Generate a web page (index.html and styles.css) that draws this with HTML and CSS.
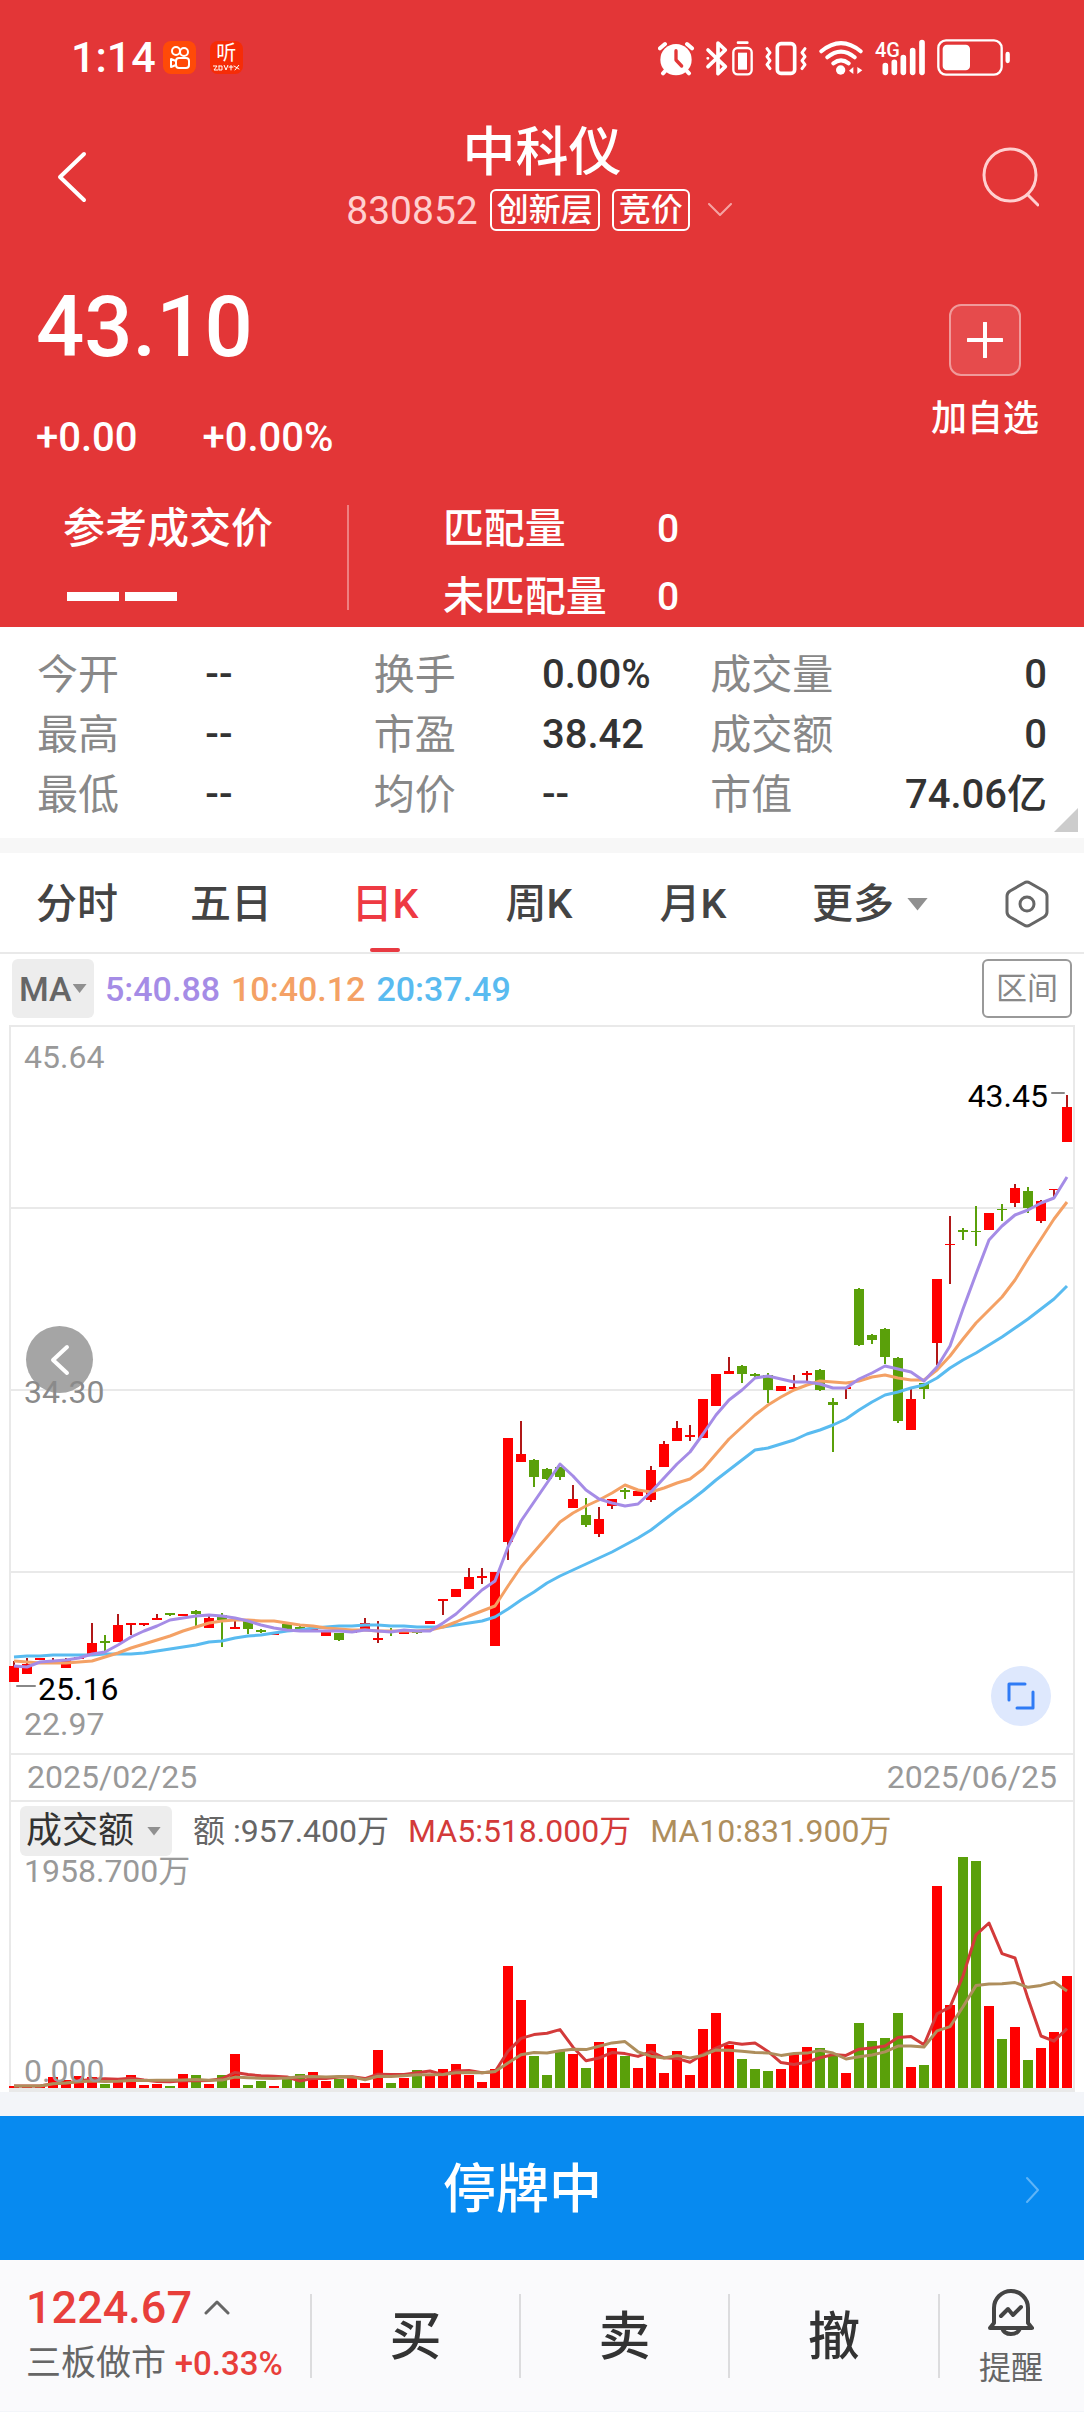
FILE: index.html
```html
<!DOCTYPE html>
<html lang="zh-CN">
<head>
<meta charset="utf-8">
<meta name="viewport" content="width=device-width, initial-scale=1">
<title>中科仪 830852</title>
<link rel="stylesheet" href="styles.css">
</head>
<body>
<header class="hero">
  <div class="status">
    <span class="clock">1:14</span>
    <svg class="app" viewBox="0 0 33 33" aria-hidden="true">
      <rect width="33" height="33" rx="8" fill="#ff4a08"/>
      <g fill="none" stroke="#fff" stroke-width="2">
        <circle cx="13" cy="10" r="4"/><circle cx="21" cy="11" r="4"/>
        <rect x="13" y="17" width="13" height="10" rx="3"/><path d="M13 20l-5-2v8l5-2"/>
      </g>
    </svg>
    <span class="app listen">听<svg viewBox="0 0 27 6" aria-hidden="true"><path d="M0 1h4L1 5h4M6 1v4h3V1H6M11 0l2 5 2-5M16 2h4M18 0v5M21 1l5 3M26 0l-4 5" fill="none" stroke="#fff"/></svg></span>
    <svg class="system" viewBox="54 42 1059 126" role="img" aria-label="闹钟 蓝牙 振动 无线网络 4G 电池">
      <circle cx="108" cy="113" r="47" fill="#fff"/>
      <g fill="none" stroke="#fff" stroke-width="12" stroke-linecap="round">
        <path d="M60 79l15-13M156 79l-15-13M80 142l-11 12M136 142l11 12"/>
        <path d="M204 84l52 50-22 21V63l22 21-52 50" stroke-width="11" stroke-linejoin="round"/>
        <path d="M203 109h1M294 62h28" stroke-width="8"/>
        <rect x="280" y="78" width="55" height="79" rx="13" stroke-width="7"/>
        <rect x="412" y="65" width="52" height="89" rx="11" stroke-width="11"/>
        <path d="M381 80l9 12-9 12 9 12-9 12 9 12M495 80l-9 12 9 12-9 12 9 12-9 12" stroke-width="9" stroke-linejoin="round"/>
        <path d="M544 88q59-49 118 0M562 106q41-34 82 0M580 124q23-18 46 0"/>
        <path d="M736 131v20M763 121v30M790 107v44M818 86v65M846 62v89" stroke-width="17"/>
        <rect x="895" y="55" width="190" height="103" rx="23" stroke-width="7"/>
        <path d="M1103 96v21" stroke-width="13"/>
      </g>
      <path d="M108 86v28l17 18" fill="none" stroke="#e33637" stroke-width="10"/>
      <rect x="294" y="92" width="27" height="51" fill="#fff"/>
      <circle cx="602" cy="144" r="14" fill="#fff"/>
      <path d="M640 135v21l-13-10zM652 135v21l15-11z" fill="#fff"/>
      <rect x="908" y="68" width="82" height="77" rx="13" fill="#fff"/>
      <text class="network" x="705" y="106">4G</text>
    </svg>
  </div>

  <nav class="nav">
    <button class="back" aria-label="返回"><svg width="31" height="52" viewBox="0 0 31 52"><path d="M28 3L4 26l24 23"/></svg></button>
    <div class="heading">
      <h1>中科仪</h1>
      <div class="sub">
        <span class="code">830852</span>
        <span class="badge">创新层</span>
        <span class="badge">竞价</span>
        <svg class="down" width="24" height="14" viewBox="0 0 24 14"><path d="M1 1l11 11L23 1"/></svg>
      </div>
    </div>
    <button class="search" aria-label="搜索"><svg width="58" height="62" viewBox="0 0 58 62"><circle cx="29" cy="29" r="26"/><path d="M47 49l10 10"/></svg></button>
  </nav>

  <section class="quote">
    <div>
      <strong class="price">43.10</strong>
      <p class="change"><span>+0.00</span><span>+0.00%</span></p>
    </div>
    <button class="watch">
      <span class="plus"><svg width="36" height="36" viewBox="0 0 36 36"><path d="M18 1v34M1 18h34"/></svg></span>
      加自选
    </button>
  </section>

  <section class="auction">
    <div class="ref"><span>参考成交价</span><span class="dashes" aria-label="--"><i></i><i></i></span></div>
    <dl class="match">
      <dt>匹配量</dt><dd>0</dd>
      <dt>未匹配量</dt><dd>0</dd>
    </dl>
  </section>
</header>

<main>
  <section class="stats">
    <dl><dt>今开</dt><dd>--</dd><dt>最高</dt><dd>--</dd><dt>最低</dt><dd>--</dd></dl>
    <dl><dt>换手</dt><dd>0.00%</dd><dt>市盈</dt><dd>38.42</dd><dt>均价</dt><dd>--</dd></dl>
    <dl class="wide"><dt>成交量</dt><dd>0</dd><dt>成交额</dt><dd>0</dd><dt>市值</dt><dd>74.06亿</dd></dl>
    <span class="corner"></span>
  </section>

  <nav class="tabs">
    <button>分时</button>
    <button>五日</button>
    <button class="active">日K</button>
    <button>周K</button>
    <button>月K</button>
    <button>更多<i class="tri big"></i></button>
    <button aria-label="设置"><svg width="44" height="48" viewBox="0 0 44 48"><path d="M19 3q3-2 6 0l14 8q3 2 3 5v16q0 3-3 5l-14 8q-3 2-6 0L5 37q-3-2-3-5V16q0-3 3-5z"/><circle cx="22" cy="24" r="7"/></svg></button>
  </nav>

  <div class="averages">
    <button class="pick">MA<i class="tri"></i></button>
    <span class="ma5">5:40.88</span>
    <span class="ma10">10:40.12</span>
    <span class="ma20">20:37.49</span>
    <button class="range">区间</button>
  </div>

  <section class="chart">
    <div class="plot">
      <svg id="candles" viewBox="11 1027 1062 726" role="img" aria-label="日K线图"></svg>
      <span class="tick top">45.64</span>
      <button class="prev" aria-label="更早"><svg width="20" height="32" viewBox="0 0 20 32"><path d="M17 3L3 16l14 13"/></svg></button>
      <span class="tick mid">34.30</span>
      <span class="tick low">22.97</span>
      <span class="mark max">43.45</span>
      <span class="mark min">25.16</span>
      <button class="expand" aria-label="全屏"><svg width="28" height="28" viewBox="0 0 28 28"><path d="M2 18V2h16M26 10v16H10"/></svg></button>
    </div>
    <div class="dates"><time>2025/02/25</time><time>2025/06/25</time></div>
    <div class="legend">
      <button class="pick turnover">成交额<i class="tri"></i></button>
      <span>额 :957.400万</span>
      <span class="v5">MA5:518.000万</span>
      <span class="v10">MA10:831.900万</span>
    </div>
    <div class="plot">
      <svg id="volume" viewBox="11 0 1062 231" role="img" aria-label="成交额"></svg>
      <span class="tick vmax">1958.700万</span>
      <span class="tick vmin">0.000</span>
    </div>
  </section>
</main>

<button class="halt"><span>停牌中</span><svg width="16" height="28" viewBox="0 0 16 28"><path d="M2 2l11 12L2 26"/></svg></button>

<footer class="bar">
  <a class="index" href="#index">
    <span class="value">1224.67<svg width="26" height="15" viewBox="0 0 26 15"><path d="M2 13L13 2l11 11"/></svg></span>
    <span class="name">三板做市 <b>+0.33%</b></span>
  </a>
  <button class="trade">买</button>
  <button class="trade">卖</button>
  <button class="trade">撤</button>
  <button class="remind">
    <svg width="46" height="48" viewBox="0 0 46 48"><path d="M6 35V20a17 17 0 0 1 34 0v15l4 5H2zM14 40q2 6 9 6t9-6M13 28l7-7 5 6 8-8"/></svg>
    提醒
  </button>
</footer>
<script src="chart.js"></script>
</body>
</html>
```

FILE: styles.css
```css
* { box-sizing: border-box; }
body {
  margin: 0;
  background: #f3f5f9;
  color: #333;
  font-family: Roboto, "Noto Sans CJK SC", sans-serif;
  font-size: 40px;
  font-weight: 500;
  line-height: 48px;
}
button {
  margin: 0;
  padding: 0;
  border: 0;
  background: none;
  color: inherit;
  font: inherit;
}
svg { display: block; }
svg path, svg circle { stroke-linecap: round; stroke-linejoin: round; }
h1, p, dl, dd { margin: 0; }
main { background: #fff; }

/* header */
.hero { background: #e33637; color: #fff; padding-bottom: 6px; }
.status { display: flex; align-items: center; padding: 32px 73px 41px 71px; }
.clock { font-size: 43px; line-height: 50px; margin-right: 7px; }
.app { width: 33px; height: 33px; margin-right: 14px; }
.listen {
  display: flex; flex-direction: column; align-items: center;
  border-radius: 8px; background: #f62c07;
  font-size: 20px; line-height: 24px; font-weight: 400;
}
.listen svg { width: 27px; height: 6px; }
.system { width: 353px; height: 42px; margin-left: auto; }
.network { font-size: 60px; fill: #fff; }

.nav { display: grid; grid-template-columns: 1fr auto 1fr; align-items: center; padding: 0 45px; }
.nav path, .nav circle { fill: none; stroke: #fff; stroke-width: 4; }
.back { justify-self: start; padding-left: 11px; }
.heading { display: flex; flex-direction: column; align-items: center; gap: 6px; }
h1 { font-size: 53px; line-height: 60px; font-weight: 500; }
.sub { display: flex; align-items: center; height: 42px; gap: 12px; margin-right: 6px; }
.code { font-size: 39px; font-weight: 400; color: #ffd0d0; padding-top: 2px; }
.badge { border: 2px solid #fff; border-radius: 6px; padding: 0 5px; font-size: 32px; line-height: 38px; }
.sub .down { margin-left: 6px; }
.sub .down path { stroke: #f5a3a3; stroke-width: 2; }
.search { justify-self: end; }
.search path, .search circle { stroke: #ffd0d0; stroke-width: 3; }

.quote { display: flex; justify-content: space-between; padding: 50px 45px 0 36px; }
.price { display: block; padding-top: 2px; font-size: 85px; line-height: 88px; font-weight: 500; }
.change { display: flex; gap: 65px; margin-top: 43px; }
.watch { display: flex; flex-direction: column; align-items: center; align-self: start; gap: 21px; padding-top: 23px; font-size: 36px; line-height: 44px; }
.plus { display: grid; place-items: center; width: 72px; height: 72px; border: 2px solid #f09a9a; border-radius: 12px; background: #e64b4c; }
.plus path { stroke: #fff; stroke-width: 4; }

.auction { display: grid; grid-template-columns: 32% 1fr; padding-top: 43px; font-size: 41px; }
.ref { display: flex; flex-direction: column; gap: 39px; padding-left: 63px; font-size: 42px; }
.dashes { display: flex; gap: 6px; padding-left: 4px; }
.dashes i { width: 52px; height: 9px; background: #fff; }
.match {
  display: grid; grid-template-columns: 214px auto; justify-content: start; row-gap: 20px;
  padding-left: 96px;
  background: linear-gradient(#ee8080, #ee8080) 0 0 / 2px 105px no-repeat;
}
.match dd { font-size: 39px; }

/* figures */
.stats { position: relative; display: grid; grid-template-columns: repeat(3, 1fr); padding: 18px 37px 13px; border-bottom: 15px solid #f7f7f7; box-sizing: content-box; line-height: 60px; }
.stats dl { display: grid; grid-template-columns: 1fr 1fr; }
.stats .wide { grid-template-columns: auto 1fr; }
.stats .wide dd { text-align: right; }
.stats dt { color: #888; font-size: 41px; font-weight: 400; }
.corner { position: absolute; right: 6px; bottom: 6px; width: 24px; height: 24px; background: #ccc; clip-path: polygon(100% 0, 100% 100%, 0 100%); }

.tabs { display: grid; grid-template-columns: repeat(5, 77fr) 100fr 57fr; height: 101px; border-bottom: 2px solid #e9e9e9; }
.tabs button { position: relative; display: flex; align-items: center; justify-content: center; padding-top: 3px; font-size: 41px; color: #444; }
.tabs .active { color: #ee3a43; }
.tabs .active::after { content: ""; position: absolute; bottom: 0; width: 30px; height: 4px; border-radius: 2px; background: #e83a42; }
.tabs svg path, .tabs svg circle { fill: none; stroke: #666; stroke-width: 3; }
.tri { flex: none; width: 14px; height: 9px; background: #909090; clip-path: polygon(0 0, 100% 0, 50% 100%); }
.tri.big { width: 21px; height: 13px; margin-left: 13px; }

.averages { display: flex; align-items: center; gap: 11px; padding: 5px 12px 7px; font-size: 34px; }
.pick { display: flex; align-items: center; border-radius: 6px; background: #ededed; }
.averages .pick { width: 82px; height: 59px; padding-left: 7px; gap: 1px; color: #666; font-size: 34px; }
.ma5 { color: #a58ce6; }
.ma10 { color: #f4a165; }
.ma20 { color: #59bbf0; }
.range { width: 90px; height: 59px; margin-left: auto; border: 2px solid #999; border-radius: 6px; color: #888; font-size: 31px; font-weight: 400; }

/* charts */
.chart { margin: 0 9px; border: 2px solid #e9e9e9; border-bottom-width: 4px; font-size: 32px; }
.plot { position: relative; }
.plot > svg { width: 100%; height: auto; overflow: visible; }
.tick, .mark { position: absolute; line-height: 32px; font-weight: 400; }
.tick { left: 13px; color: #999; }
.mark { color: #000; }
.top { top: 14px; }
.mid { top: 349px; }
.low { bottom: 13px; }
.max { top: 53px; right: 25px; }
.min { bottom: 48px; left: 27px; }
.vmax { top: -2px; }
.vmin { bottom: 1px; }
.prev, .expand { position: absolute; display: grid; place-items: center; border-radius: 50%; }
.prev { top: 299px; left: 15px; width: 67px; height: 67px; background: #a5a5a5; }
.prev path { fill: none; stroke: #fff; stroke-width: 4; }
.expand { right: 22px; bottom: 27px; width: 60px; height: 60px; background: #dee8fd; }
.expand path { fill: none; stroke: #2f7bf5; stroke-width: 3; }
.mid { color: #8a8a8a; }
.dates { display: flex; justify-content: space-between; padding: 0 16px; border: solid #e9e9e9; border-width: 2px 0; color: #999; line-height: 45px; font-weight: 400; }
.legend { display: flex; align-items: center; gap: 19px; padding: 4px 9px 1px; color: #666; font-weight: 400; white-space: nowrap; }
.turnover { width: 152px; height: 50px; padding-left: 6px; gap: 13px; margin-right: 2px; color: #333; font-size: 36px; }
.v5 { color: #d33a3a; }
.v10 { color: #ae8e5c; }

/* bottom */
.halt { display: flex; align-items: center; width: 100%; height: 144px; margin-top: 24px; padding: 4px 43px 0 0; background: #078af0; color: #fff; font-size: 53px; }
.halt span { flex: 1; padding-left: 20px; }
.halt path { fill: none; stroke: #5fb4f7; stroke-width: 2; }
.bar { display: grid; grid-template-columns: 310fr 209fr 209fr 210fr 146fr; align-items: center; min-height: 151px; background: #fafafc; }
.index { padding-left: 26px; color: #666; text-decoration: none; white-space: nowrap; }
.value { display: flex; align-items: center; gap: 12px; color: #e83f3b; font-size: 45px; line-height: 56px; }
.value path { fill: none; stroke: #666; stroke-width: 3; }
.name { display: block; font-size: 35px; line-height: 56px; font-weight: 400; }
.name b { color: #e83f3b; font-size: 33px; font-weight: 500; }
.trade { height: 84px; padding-top: 4px; border-left: 2px solid #dcdcde; font-size: 52px; }
.remind { display: flex; flex-direction: column; align-items: center; align-self: stretch; justify-content: center; gap: 12px; background: linear-gradient(#dcdcde, #dcdcde) 0 50% / 2px 84px no-repeat; color: #666; font-size: 32px; line-height: 40px; padding-top: 4px; font-weight: 400; }
.remind path { fill: none; stroke: #444; stroke-width: 4; }
```

FILE: chart.js
```js
// Each candle: colour, high, low, body top, body bottom (plot units, y grows down)
const candles = `
r 1661 1682 1666 1682|r 1658 1674 1664 1674|r 1658 1660 1658 1660|r 1658 1662 1660 1662|r 1658 1668 1659 1668|r 1657 1659 1657 1659
r 1623 1654 1643 1654|g 1635 1651 1641 1643|r 1614 1642 1625 1642|r 1623 1635 1623 1625|r 1623 1626 1623 1625|r 1614 1619 1618 1620
g 1613 1616 1613 1615|r 1614 1616 1614 1616|g 1610 1626 1611 1614|r 1615 1628 1618 1628|g 1613 1647 1615 1620|r 1620 1629 1627 1629
g 1621 1634 1621 1629|g 1629 1633 1630 1632|r 1634 1635 1633 1635|g 1624 1630 1624 1629|g 1625 1630 1627 1629|r 1630 1631 1629 1631
r 1632 1636 1632 1636|g 1633 1641 1633 1640|r 1631 1633 1631 1633|r 1618 1629 1623 1629|r 1621 1643 1638 1640|g 1628 1636 1630 1632
r 1632 1634 1632 1634|g 1631 1634 1631 1633|r 1621 1624 1621 1624|r 1599 1615 1599 1601|r 1589 1597 1589 1597|r 1568 1589 1577 1589
r 1568 1584 1576 1578|r 1572 1646 1572 1646|r 1438 1560 1438 1542|r 1421 1462 1454 1462|g 1459 1487 1460 1477|g 1468 1480 1469 1479
g 1467 1480 1467 1477|r 1485 1508 1499 1508|g 1498 1527 1515 1525|r 1507 1537 1519 1534|r 1499 1509 1499 1506|g 1488 1499 1490 1492
r 1491 1496 1491 1496|r 1466 1502 1470 1500|r 1441 1467 1444 1467|r 1421 1441 1428 1441|r 1425 1441 1435 1437|r 1399 1438 1399 1438
r 1374 1406 1374 1406|r 1357 1374 1371 1374|g 1365 1383 1366 1374|g 1373 1377 1374 1376|g 1373 1403 1375 1390|r 1386 1391 1386 1391
r 1375 1389 1387 1389|r 1371 1383 1373 1375|g 1369 1391 1370 1390|g 1398 1452 1402 1405|r 1387 1399 1387 1389|g 1288 1346 1289 1345
g 1334 1344 1335 1340|g 1328 1364 1329 1357|g 1357 1423 1358 1421|r 1389 1430 1399 1430|g 1383 1399 1383 1389|r 1279 1365 1279 1343
r 1216 1284 1244 1245|g 1228 1240 1230 1232|g 1206 1246 1231 1232|r 1213 1230 1213 1230|g 1204 1221 1209 1210|r 1184 1207 1188 1203
g 1187 1213 1191 1208|r 1200 1223 1201 1221|r 1189 1197 1189 1190|r 1095 1142 1107 1142`
  .trim().split(/[|\n]/).map(row => row.trim().split(' '));

const averages = {
  '#59bbf0': [1657,1656,1656,1655,1655,1655,1655,1654,1654,1654,1653,1651,1649,1647,1645,1642,1641,1638,1636,1635,1633,1631,1630,1628,1627,1626,1626,1625,1625,1626,1626,1627,1627,1627,1625,1623,1621,1617,1609,1600,1592,1583,1576,1570,1564,1558,1552,1545,1538,1530,1520,1510,1501,1491,1480,1470,1460,1450,1448,1444,1440,1434,1430,1425,1419,1410,1402,1395,1392,1388,1385,1378,1368,1360,1353,1345,1337,1328,1319,1309,1299,1286],
  '#f4a165': [1661,1662,1663,1663,1663,1662,1661,1657,1653,1648,1644,1640,1636,1631,1627,1623,1621,1620,1620,1621,1621,1623,1625,1626,1628,1629,1630,1630,1631,1631,1631,1631,1630,1627,1622,1616,1611,1606,1586,1567,1552,1537,1522,1513,1506,1500,1493,1485,1490,1492,1488,1483,1479,1469,1454,1439,1427,1415,1405,1397,1390,1385,1381,1382,1383,1381,1377,1375,1378,1380,1380,1370,1356,1339,1323,1310,1297,1280,1259,1239,1219,1202],
  '#a58ce6': [1666,1667,1662,1661,1660,1658,1654,1652,1645,1637,1631,1626,1620,1618,1616,1615,1616,1618,1621,1625,1628,1630,1631,1631,1631,1631,1632,1630,1631,1632,1630,1631,1631,1623,1614,1602,1590,1581,1547,1521,1502,1483,1464,1476,1490,1499,1503,1506,1504,1492,1478,1464,1452,1434,1415,1400,1390,1378,1376,1379,1382,1382,1384,1388,1388,1379,1373,1366,1369,1372,1381,1367,1346,1309,1274,1240,1226,1215,1210,1203,1198,1177]
};

const volumes = [2,2,2,11,8,12,11,4,9,13,3,4,2,14,13,4,13,34,3,7,2,9,14,16,7,9,10,5,38,5,10,18,14,19,24,13,6,19,122,88,32,13,37,34,20,46,40,32,20,44,15,37,13,59,75,43,29,19,17,19,34,41,40,33,15,65,47,50,75,21,23,202,83,231,227,82,49,61,28,40,56,112];

const x = i => 14 + 13 * i;
const rect = (cx, top, w, h, fill) => `<rect x="${cx - w / 2}" y="${top}" width="${w}" height="${h}" fill="${fill}"/>`;
const line = (ys, stroke) => `<polyline points="${ys.map((y, i) => x(i) + ',' + y.toFixed(1)).join(' ')}" fill="none" stroke="${stroke}" stroke-width="3" stroke-linejoin="round"/>`;

let price = [1208, 1390, 1572].map(y => `<path d="M11 ${y}H1073" stroke="#e9e9e9" stroke-width="2"/>`).join('');
candles.forEach(([c, high, low, top, bottom], i) => {
  price += rect(x(i), high, 2, low - high, c === 'r' ? '#b01818' : '#5aa00a');
  price += rect(x(i), top, 10, bottom - top, c === 'r' ? '#ff0000' : '#5aa00a');
});
for (const colour in averages) price += line(averages[colour], colour);
price += '<path d="M17 1686H35M1052 1093H1064" stroke="#888" stroke-width="2"/>';
document.getElementById('candles').innerHTML = price;

const mean = n => volumes.map((_, i) => {
  const part = volumes.slice(Math.max(0, i - n + 1), i + 1);
  return 231 - part.reduce((a, b) => a + b, 0) / part.length;
});
document.getElementById('volume').innerHTML =
  volumes.map((v, i) => rect(x(i), 231 - v, 10, v, candles[i][0] === 'r' ? '#ff0000' : '#5aa00a')).join('') +
  line(mean(5), '#d33a3a') + line(mean(10), '#ae8e5c');
```
